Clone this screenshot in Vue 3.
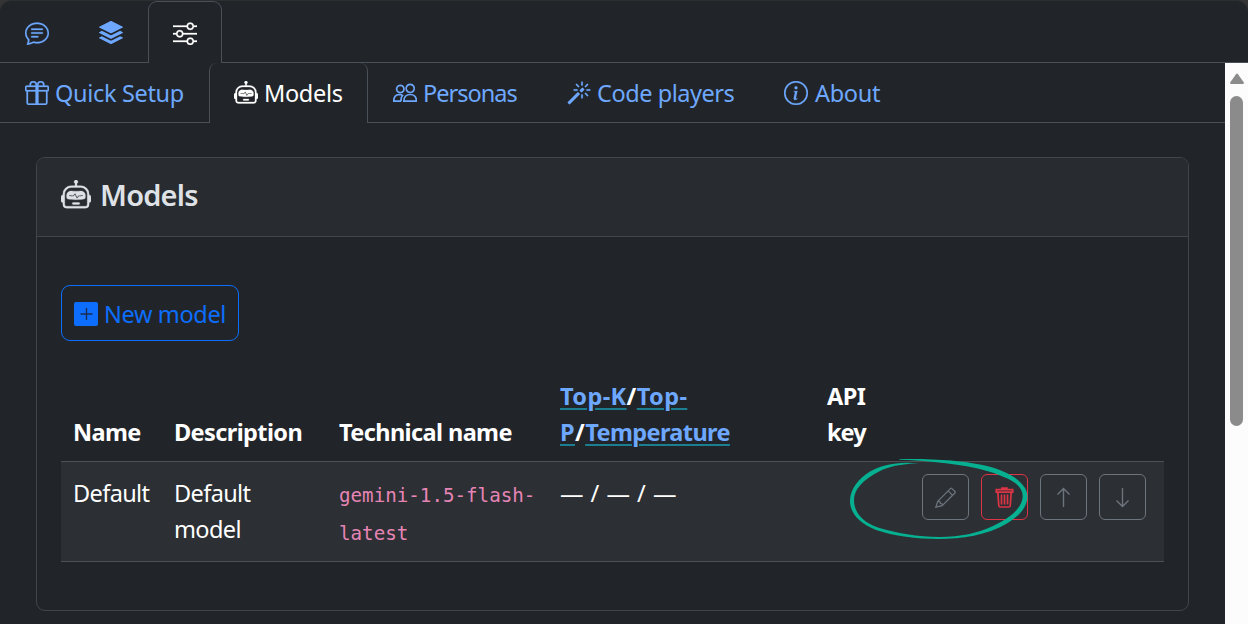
<script setup>
import { h } from 'vue'

const shapes = {
  chat: ['M2.678 11.894a1 1 0 0 1 .287.801 11 11 0 0 1-.398 2c1.395-.323 2.247-.697 2.634-.893a1 1 0 0 1 .71-.074A8 8 0 0 0 8 14c3.996 0 7-2.807 7-6s-3.004-6-7-6-7 2.808-7 6c0 1.468.617 2.83 1.678 3.894m-.493 3.905a22 22 0 0 1-.713.129c-.2.032-.352-.176-.273-.362a10 10 0 0 0 .244-.637l.003-.01c.248-.72.45-1.548.524-2.319C.743 11.37 0 9.76 0 8c0-3.866 3.582-7 8-7s8 3.134 8 7-3.582 7-8 7a9 9 0 0 1-2.347-.306c-.52.263-1.639.742-3.468 1.105', 'M4 5.5a.5.5 0 0 1 .5-.5h7a.5.5 0 0 1 0 1h-7a.5.5 0 0 1-.5-.5M4 8a.5.5 0 0 1 .5-.5h7a.5.5 0 0 1 0 1h-7A.5.5 0 0 1 4 8m0 2.5a.5.5 0 0 1 .5-.5h4a.5.5 0 0 1 0 1h-4a.5.5 0 0 1-.5-.5'],
  stack: ['m14.12 10.163 1.715.858c.22.11.22.424 0 .534L8.267 15.34a.6.6 0 0 1-.534 0L.165 11.555a.299.299 0 0 1 0-.534l1.716-.858 5.317 2.659c.505.252 1.1.252 1.604 0l5.317-2.66zM7.733.063a.6.6 0 0 1 .534 0l7.568 3.784a.3.3 0 0 1 0 .535L8.267 8.165a.6.6 0 0 1-.534 0L.165 4.382a.299.299 0 0 1 0-.535z', 'm14.12 6.576 1.715.858c.22.11.22.424 0 .534l-7.568 3.784a.6.6 0 0 1-.534 0L.165 7.968a.299.299 0 0 1 0-.534l1.716-.858 5.317 2.659c.505.252 1.1.252 1.604 0z'],
  sliders: ['M11.5 2a1.5 1.5 0 1 0 0 3 1.5 1.5 0 0 0 0-3M9.05 3a2.5 2.5 0 0 1 4.9 0H16v1h-2.05a2.5 2.5 0 0 1-4.9 0H0V3zM4.5 7a1.5 1.5 0 1 0 0 3 1.5 1.5 0 0 0 0-3M2.05 8a2.5 2.5 0 0 1 4.9 0H16v1H6.95a2.5 2.5 0 0 1-4.9 0H0V8zm9.45 4a1.5 1.5 0 1 0 0 3 1.5 1.5 0 0 0 0-3m-2.45 1a2.5 2.5 0 0 1 4.9 0H16v1h-2.05a2.5 2.5 0 0 1-4.9 0H0v-1z'],
  gift: ['M3 2.5a2.5 2.5 0 0 1 5 0 2.5 2.5 0 0 1 5 0v.006c0 .07 0 .27-.038.494H15a1 1 0 0 1 1 1v2a1 1 0 0 1-1 1v7.5a1.5 1.5 0 0 1-1.5 1.5h-11A1.5 1.5 0 0 1 1 14.5V7a1 1 0 0 1-1-1V4a1 1 0 0 1 1-1h2.038A3 3 0 0 1 3 2.506zm1.068.5H7v-.5a1.5 1.5 0 1 0-3 0c0 .085.002.274.045.43zM9 3h2.932l.023-.07c.043-.156.045-.345.045-.43a1.5 1.5 0 0 0-3 0zM1 4v2h6V4zm8 0v2h6V4zm5 3H9v8h4.5a.5.5 0 0 0 .5-.5zm-7 8V7H2v7.5a.5.5 0 0 0 .5.5z'],
  robot: ['M6 12.5a.5.5 0 0 1 .5-.5h3a.5.5 0 0 1 0 1h-3a.5.5 0 0 1-.5-.5M3 8.062C3 6.76 4.235 5.765 5.53 5.886a26.6 26.6 0 0 0 4.94 0C11.765 5.765 13 6.76 13 8.062v1.157a.93.93 0 0 1-.765.935c-.845.147-2.34.346-4.235.346s-3.39-.2-4.235-.346A.93.93 0 0 1 3 9.219zm4.542-.827a.25.25 0 0 0-.217.068l-.92.9a25 25 0 0 1-1.871-.183.25.25 0 0 0-.068.495c.55.076 1.232.149 2.02.193a.25.25 0 0 0 .189-.071l.754-.736.847 1.71a.25.25 0 0 0 .404.062l.932-.97a25 25 0 0 0 1.922-.188.25.25 0 0 0-.068-.495c-.538.074-1.207.145-1.98.189a.25.25 0 0 0-.166.076l-.754.785-.842-1.7a.25.25 0 0 0-.182-.135', 'M8.5 1.866a1 1 0 1 0-1 0V3h-2A4.5 4.5 0 0 0 1 7.5V8a1 1 0 0 0-1 1v2a1 1 0 0 0 1 1v1a2 2 0 0 0 2 2h10a2 2 0 0 0 2-2v-1a1 1 0 0 0 1-1V9a1 1 0 0 0-1-1v-.5A4.5 4.5 0 0 0 10.5 3h-2zM14 7.5V13a1 1 0 0 1-1 1H3a1 1 0 0 1-1-1V7.5A3.5 3.5 0 0 1 5.5 4h5A3.5 3.5 0 0 1 14 7.5'],
  magic: ['M9.5 2.672a.5.5 0 1 0 1 0V.843a.5.5 0 0 0-1 0zm4.5.035A.5.5 0 0 0 13.293 2L12 3.293a.5.5 0 1 0 .707.707zM7.293 4A.5.5 0 1 0 8 3.293L6.707 2A.5.5 0 0 0 6 2.707zm-.621 2.5a.5.5 0 1 0 0-1H4.843a.5.5 0 1 0 0 1zm8.485 0a.5.5 0 1 0 0-1h-1.829a.5.5 0 0 0 0 1zM13.293 10A.5.5 0 1 0 14 9.293L12.707 8a.5.5 0 1 0-.707.707zM9.5 11.157a.5.5 0 0 0 1 0V9.328a.5.5 0 0 0-1 0zm1.854-5.097a.5.5 0 0 0 0-.706l-.708-.708a.5.5 0 0 0-.707 0L8.646 5.94a.5.5 0 0 0 0 .707l.708.708a.5.5 0 0 0 .707 0l1.293-1.293Zm-3 3a.5.5 0 0 0 0-.706l-.708-.708a.5.5 0 0 0-.707 0L.646 13.94a.5.5 0 0 0 0 .707l.707.707a.5.5 0 0 0 .707 0z'],
  info: ['M8 15A7 7 0 1 1 8 1a7 7 0 0 1 0 14m0 1A8 8 0 1 0 8 0a8 8 0 0 0 0 16', 'm8.93 6.588-2.29.287-.082.38.45.083c.294.07.352.176.288.469l-.738 3.468c-.194.897.105 1.319.808 1.319.545 0 1.178-.252 1.465-.598l.088-.416c-.2.176-.492.246-.686.246-.275 0-.375-.193-.304-.533zM9 4.5a1 1 0 1 1-2 0 1 1 0 0 1 2 0'],
}
const lines = {
  people: { box: 24, width: 1.7, d: ['M7.3 4.3a3.7 3.7 0 1 0 .01 0', 'M17.2 3.3a4.1 4.1 0 1 0 .01 0', 'M10.8 20.2c0-4.3 2.4-6.7 6.4-6.7s6.4 2.4 6.1 6.7z', 'M8.2 20.2H.8c-.2-4.2 2-6.6 5.3-6.700 1.300 0 2.500.3 3.400 1-1.300 1.500-1.700 3.500-1.300 5.700'] },
  pencil: { box: 21, width: 1.2, d: ['M.8 20.2 2.7 14.3 15.4 1.6Q16.2.8 17 1.6L19.9 4.5Q20.6 5.2 19.9 6L7.2 18.6z', 'M2.7 14.3 5 14.7 5.3 16.5 7 16.7 7.2 18.6M13.2 3.9l4.4 4.4'] },
  trash: { box: 21, width: 1.7, d: ['M2.3 2.7h16.4v2.5H2.3zM8 2.5V1h5v1.5', 'M3.8 5.4l1 13.3q.1 1.3 1.3 1.3h8.8q1.2 0 1.3-1.3l1-13.3', 'M7.5 7.5v10M10.5 7.5v10M13.5 7.5v10'] },
  up: { box: 21, width: 1.4, d: ['M10.5 20V1.5M4.5 7.5l6-6 6 6'] },
  down: { box: 21, width: 1.4, d: ['M10.5 1v18.5M4.5 13.5l6 6 6-6'] },
}

const Icon = ({ name }) => {
  const line = lines[name]
  return line
    ? h('svg', { viewBox: `0 0 ${line.box} ${line.box}`, fill: 'none', stroke: 'currentColor', 'stroke-width': line.width }, line.d.map(d => h('path', { d })))
    : h('svg', { viewBox: '0 0 16 16', fill: 'currentColor', stroke: 'currentColor', 'stroke-width': name === 'stack' ? 0 : 0.18 }, shapes[name].map(d => h('path', { d, 'fill-rule': 'evenodd' })))
}
Icon.props = ['name']

const tabs = [
  { id: 'quick', label: 'Quick Setup', icon: 'gift' },
  { id: 'models', label: 'Models', icon: 'robot', active: true },
  { id: 'personas', label: 'Personas', icon: 'people' },
  { id: 'players', label: 'Code players', icon: 'magic' },
  { id: 'about', label: 'About', icon: 'info' },
]
const actions = ['pencil', 'trash', 'up', 'down']
</script>

<template>
  <div class="window">
    <nav class="top">
      <a><Icon name="chat" class="ico" /></a>
      <a><Icon name="stack" class="ico" /></a>
      <a class="active"><Icon name="sliders" class="ico" /></a>
    </nav>
    <div class="body">
      <main>
        <nav class="tabs">
          <a v-for="t in tabs" :key="t.id" :class="[t.id, { active: t.active }]">
            <Icon :name="t.icon" class="ico" /><span>{{ t.label }}</span>
          </a>
        </nav>
        <section class="card">
          <header><Icon name="robot" class="big" /><h5>Models</h5></header>
          <div class="content">
            <button class="new">
              <svg class="ico" viewBox="0 0 24 24"><rect width="24" height="24" rx="2" fill="#0d6efd" /><path d="M12.500 6v12M6.500 12h12" stroke="#1c2c50" stroke-width="1.4" /></svg>
              <span>New model</span>
            </button>
            <table>
              <colgroup><col class="c1" /><col class="c2" /><col class="c3" /><col class="c4" /><col class="c5" /><col class="c6" /></colgroup>
              <thead>
                <tr>
                  <th>Name</th>
                  <th>Description</th>
                  <th>Technical name</th>
                  <th><span class="wide"><a>Top-K</a>/<a>Top-</a></span><br /><span class="mid"><a>P</a>/</span><a>Temperature</a></th>
                  <th>API<br /><span class="key">key</span></th>
                  <th></th>
                </tr>
              </thead>
              <tbody>
                <tr>
                  <td>Default</td>
                  <td>Default<br />model</td>
                  <td><code>gemini-1.5-flash-<br />latest</code></td>
                  <td><span class="dashes">— / — / —</span></td>
                  <td></td>
                  <td class="acts">
                    <div class="actions">
                      <button v-for="a in actions" :key="a" :class="a"><Icon :name="a" class="small" /></button>
                      <svg class="ring" viewBox="0 0 184 86">
                        <path d="M51.5 3C90 2.5 115 5 132 8.5C150 12 164 18 172 26C178 32 179.5 36 179.5 41C179 52 170 61 158 68C140 79 113 83 90 83C70 83 45 80 28 74C11 67 2 57 2 45C2 33 11 22 22 15.5C33 9 50 5 71 7.3C52 8 40 11 32 15C14 24 6 34 6 44C6 56 14 66 30 71.5C48 77 70 81 92 81C112 81 130 77 145 70C162 62 174.5 52 174.7 40C174.7 32 167 25 155 20.7C135 11 95 5.5 51.5 3.8Z" />
                      </svg>
                    </div>
                  </td>
                </tr>
              </tbody>
            </table>
          </div>
        </section>
      </main>
      <aside class="scroll">
        <svg viewBox="0 0 16 12"><path d="M7 1.2Q8 0 9 1.2L14.7 9.2Q15.6 11 13.7 11H2.3Q.4 11 1.3 9.2Z" fill="#8b8b8b" /></svg>
        <div class="thumb"></div>
      </aside>
    </div>
  </div>
</template>

<style>
body { background: #343434; }
</style>
<style scoped>
* { box-sizing: border-box; }
.window { width: 1248px; height: 624px; overflow: hidden; background: #212529; border-top: 1px solid #2c2e30; border-radius: 12px 12px 0 0; font: 23.5px/36px "Noto Sans", "Open Sans", sans-serif; color: #fff; letter-spacing: -0.5px; }
svg { display: block; flex: none; }
.ico { width: 24px; height: 24px; }
.top { display: flex; height: 62px; border-bottom: 1px solid #495057; }
.top a { width: 74px; height: 62px; padding-top: 1px; display: flex; align-items: center; justify-content: center; color: #6ea8fe; border: 1px solid transparent; border-bottom: 0; }
.top a.active { color: #fff; background: #212529; border-color: #495057; border-radius: 9px 9px 0 0; }
.body { display: flex; height: 561px; }
main { width: 1225px; }
.tabs { display: flex; height: 61px; margin-top: -1px; padding-top: 1px; border-bottom: 1px solid #495057; }
.tabs a { height: 60px; display: flex; align-items: center; gap: 6px; padding: 0 0 1px 25px; color: #6ea8fe; white-space: nowrap; }
.tabs .quick { width: 209px; letter-spacing: -0.33px; }
.tabs .models { width: 159px; letter-spacing: -0.33px; }
.tabs .personas { width: 174px; letter-spacing: -0.97px; }
.tabs .players { width: 217px; letter-spacing: -0.45px; }
.tabs .about { letter-spacing: -0.3px; gap: 7px; }
.tabs .active { color: #fff; background: #212529; border: 1px solid #495057; border-top: 0; border-bottom: 0; border-radius: 8px 8px 0 0; padding-left: 24px; }
.card { width: 1153px; height: 454px; margin: 34px 0 0 36px; border: 1px solid #42464a; border-radius: 9px; overflow: hidden; }
.card header { height: 79px; display: flex; align-items: center; gap: 9px; padding: 0 24px 4px; background: #282b2f; border-bottom: 1px solid #42464a; color: #dee2e6; }
.big { width: 30px; height: 30px; }
h5 { margin: 0; font-size: 29px; font-weight: 600; letter-spacing: -0.8px; }
.content { padding: 48px 24px; }
button { font: inherit; letter-spacing: inherit; background: none; border: 1px solid; display: flex; align-items: center; padding: 0; }
.new { width: 178px; height: 56px; padding: 2px 0 0 12px; gap: 6px; color: #0d6efd; border-radius: 9px; white-space: nowrap; letter-spacing: -0.35px; }
table { width: 1103px; margin-top: 25px; border-collapse: separate; border-spacing: 0; table-layout: fixed; }
.c1 { width: 101px; } .c2 { width: 165px; } .c3 { width: 221px; } .c4 { width: 267px; } .c5 { width: 95px; }
th, td { text-align: left; padding: 12px 0 11px 12px; border-bottom: 1px solid #4d5154; white-space: nowrap; }
th { vertical-align: bottom; font-weight: 700; height: 95px; letter-spacing: -0.6px; }
td { vertical-align: top; background: #2c2f33; height: 100px; padding: 13px 0 10px 12px; letter-spacing: -0.62px; }
td.acts { padding-top: 12px; }
th a { color: #6ea8fe; text-decoration: underline #1b7e91 2px; text-underline-offset: 3px; }
.wide { letter-spacing: 0.4px; }
.mid { letter-spacing: 0.4px; }
.key { letter-spacing: -1px; }
.dashes { letter-spacing: 0.5px; }
code { display: block; font: 19.2px/38px "DejaVu Sans Mono", monospace; letter-spacing: 0; color: #e685b5; padding-top: 2px; margin-bottom: -2px; }
.actions { display: flex; gap: 12px; position: relative; }
.actions button { width: 47px; height: 46px; justify-content: center; border-radius: 6px; color: #6c757d; }
.actions .trash { color: #dc3545; }
.small { width: 21px; height: 21px; }
.ring { position: absolute; left: -74px; top: -18px; width: 184px; height: 86px; fill: #06b090; }
.scroll { width: 23px; background: #fcfcfc; display: flex; flex-direction: column; align-items: center; padding-top: 10px; }
.scroll svg { width: 16px; height: 12px; }
.thumb { width: 13px; height: 330px; margin-top: 11px; border-radius: 7px; background: #8b8b8b; }
</style>
